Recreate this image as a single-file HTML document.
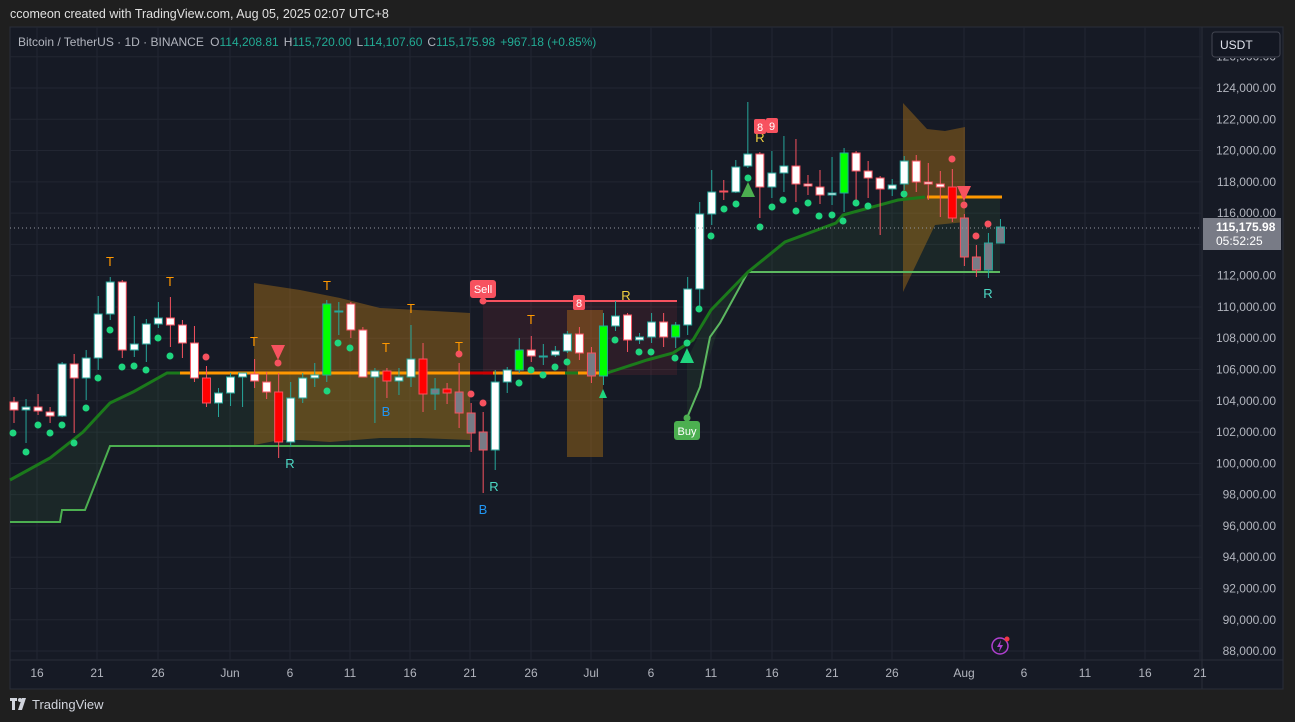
<!DOCTYPE html>
<html><head><meta charset="utf-8"><style>
html,body{margin:0;padding:0;background:#1f1f1f;width:1295px;height:722px;overflow:hidden;font-family:"Liberation Sans",sans-serif}
svg{display:block}
</style></head><body>
<svg id="s" width="1295" height="722" xmlns="http://www.w3.org/2000/svg" font-family="Liberation Sans, sans-serif">
<defs><clipPath id="ax"><rect x="0" y="58" width="1295" height="700"/></clipPath></defs>
<rect x="0" y="0" width="1295" height="722" fill="#1f1f1f"/>
<text x="10" y="18" fill="#e0e0e0" font-size="12.5">ccomeon created with TradingView.com, Aug 05, 2025 02:07 UTC+8</text>
<rect x="10" y="27" width="1273" height="662" fill="#161a25" stroke="#2a2e39"/>
<line x1="1202" y1="27" x2="1202" y2="689" stroke="#2a2e39"/>
<line x1="10" y1="660" x2="1283" y2="660" stroke="#2a2e39"/>
<g id="grid" stroke="#222632" stroke-width="1"></g>
<g id="plot"></g>
<g id="axis" fill="#b2b5be" font-size="12" clip-path="url(#ax)"></g>
<rect x="1212" y="32" width="68" height="25" rx="3" fill="#131722" stroke="#434651"/>
<text x="1220" y="49" fill="#e0e3eb" font-size="12">USDT</text>
<line x1="10" y1="228" x2="1202" y2="228" stroke="#9598a1" stroke-dasharray="1 3"/>
<rect x="1203" y="218" width="78" height="32" fill="#787b86"/>
<text x="1216" y="231" fill="#fff" font-size="12" font-weight="bold">115,175.98</text>
<text x="1216" y="245" fill="#fff" font-size="12">05:52:25</text>
<text x="18" y="46" font-size="12" fill="#b2b5be">Bitcoin / TetherUS · 1D · BINANCE <tspan dx="3">O</tspan><tspan fill="#22ab94">114,208.81</tspan><tspan dx="5">H</tspan><tspan fill="#22ab94">115,720.00</tspan><tspan dx="5">L</tspan><tspan fill="#22ab94">114,107.60</tspan><tspan dx="5">C</tspan><tspan fill="#22ab94">115,175.98</tspan><tspan dx="5" fill="#22ab94">+967.18 (+0.85%)</tspan></text>
<circle cx="1000" cy="646" r="8" fill="none" stroke="#b040d0" stroke-width="1.5"/>
<path d="M1001 640 L997 647 L1000 647 L999 652 L1003 645 L1000 645 Z" fill="#b040d0"/>
<circle cx="1007" cy="639" r="2.5" fill="#f23645"/>
<g fill="#d1d4dc"><rect x="10" y="698" width="7" height="3"/><rect x="12" y="698" width="3" height="12"/><circle cx="20" cy="700" r="2"/><path d="M22 698 L26 698 L22 710 L18 710 Z"/></g>
<text x="32" y="709" fill="#d1d4dc" font-size="13">TradingView</text>
</svg>
<script>
const NS="http://www.w3.org/2000/svg";
const plot=document.getElementById('plot'),grid=document.getElementById('grid'),axis=document.getElementById('axis');
function el(p,t,a,txt){const e=document.createElementNS(NS,t);for(const k in a)e.setAttribute(k,a[k]);if(txt!==undefined)e.textContent=txt;p.appendChild(e);return e;}
for(let p=126000;p>=88000;p-=2000){const y=88+(124000-p)/2000*31.28;if(y>30){el(grid,'line',{x1:10,x2:1202,y1:y,y2:y});}
 el(axis,'text',{x:1276,y:y+4,'text-anchor':'end'},p.toLocaleString('en-US')+'.00');}
const dl=[[37,'16'],[97,'21'],[158,'26'],[230,'Jun'],[290,'6'],[350,'11'],[410,'16'],[470,'21'],[531,'26'],[591,'Jul'],[651,'6'],[711,'11'],[772,'16'],[832,'21'],[892,'26'],[964,'Aug'],[1024,'6'],[1085,'11'],[1145,'16'],[1200,'21']];
dl.forEach(d=>{el(grid,'line',{x1:d[0],x2:d[0],y1:27,y2:660});el(document.getElementById('s'),'text',{x:d[0],y:677,'text-anchor':'middle',fill:'#b2b5be','font-size':12},d[1]);});
el(plot,'path',{d:'M10 480 L50 458 L83 432 L110 403 L133 392 L167 373 L180 373 L470 373 L470 446 L110 446 L85 510 L60 510 L60 522 L10 522 Z',fill:'rgba(76,175,80,0.09)'});
el(plot,'path',{d:'M687 360 L711 310 L748 272 L785 242 L836 223 L843 215 L898 200 L925 197 L1000 197 L1000 272 L748 272 L720 323 L700 387 L687 418 Z',fill:'rgba(76,175,80,0.09)'});
el(plot,'path',{d:'M254 283 L300 290 L340 298 L380 308 L470 313 L470 440 L420 438 L380 438 L330 442 L300 440 L280 440 L254 445 Z',fill:'rgba(200,130,20,0.38)'});
el(plot,'rect',{x:567,y:310,width:36,height:147,fill:'rgba(200,130,20,0.38)'});
el(plot,'path',{d:'M903 103 L927 129 L945 131 L965 127 L965 222 L935 225 L903 292 Z',fill:'rgba(200,130,20,0.38)'});
el(plot,'rect',{x:483,y:301,width:194,height:74,fill:'rgba(242,54,69,0.1)'});
el(plot,'line',{x1:483,x2:677,y1:301,y2:301,stroke:'#f7525f','stroke-width':2});
el(plot,'path',{d:'M10 522 L60 522 L62 510 L85 510 L110 446 L470 446',fill:'none',stroke:'#4caf50','stroke-width':2});
el(plot,'path',{d:'M687 418 L700 387 L710 337 L720 323 L748 272 L1000 272',fill:'none',stroke:'#5cb860','stroke-width':2});
el(plot,'path',{d:'M10 480 L50 458 L83 432 L110 403 L133 392 L167 373 L180 373',fill:'none',stroke:'#1b7a1b','stroke-width':3});
el(plot,'path',{d:'M180 373 L470 373',stroke:'#ff9800','stroke-width':3});
el(plot,'path',{d:'M470 373 L493 373',stroke:'#cc0000','stroke-width':3});
el(plot,'path',{d:'M493 373 L565 373',stroke:'#ff9800','stroke-width':3});
el(plot,'path',{d:'M565 373 L578 373',stroke:'#1b7a1b','stroke-width':3});
el(plot,'path',{d:'M578 373 L607 373',stroke:'#ff9800','stroke-width':3});
el(plot,'path',{d:'M607 373 L647 360 L673 353 L693 340 L711 310 L748 272 L785 242 L836 223 L843 215 L898 200 L925 197',fill:'none',stroke:'#1b7a1b','stroke-width':3});
el(plot,'path',{d:'M927 197 L1002 197',stroke:'#ff9800','stroke-width':3});
const C=[[402,410,397,423,'r'],[407,410,399,443,'t'],[407,411,394,415,'r'],[412,416,407,423,'r'],[364,416,362,417,'t'],[364,378,354,433,'r'],[358,378,350,400,'t'],[314,358,296,370,'t'],[282,314,277,320,'t'],[282,350,280,358,'r'],
[344,350,316,357,'t'],[324,344,319,362,'t'],[318,324,302,328,'t'],[318,325,297,347,'r'],[325,343,320,358,'r'],[343,378,326,382,'r'],[378,403,366,407,'R'],[393,403,388,417,'t'],[377,393,373,406,'t'],[373,377,373,407,'t'],
[374,381,359,388,'r'],[382,392,372,399,'r'],[392,442,373,458,'R'],[398,442,382,447,'t'],[378,398,373,403,'t'],[375,378,363,387,'t'],[304,375,300,382,'G'],[311,312,302,335,'t'],[304,330,302,338,'r'],[330,377,327,377,'r'],
[371,377,368,423,'t'],[371,381,368,398,'R'],[377,381,368,395,'t'],[359,377,325,387,'t'],[359,394,343,412,'R'],[389,394,378,410,'gt'],[389,393,383,404,'R'],[392,413,363,428,'gr'],[413,433,403,452,'gr'],[432,450,412,493,'gr'],
[382,450,370,470,'t'],[370,382,367,393,'t'],[350,370,338,373,'G'],[350,356,336,362,'r'],[356,357,344,365,'t'],[351,355,346,357,'t'],[334,351,331,353,'t'],[334,353,327,360,'r'],[353,376,347,383,'gr'],[326,376,313,385,'G'],
[316,326,301,331,'t'],[315,340,313,352,'r'],[337,340,333,344,'t'],[322,337,313,343,'t'],[322,337,313,347,'r'],[325,337,322,348,'G'],[289,325,277,335,'t'],[214,289,202,310,'t'],[192,214,170,225,'t'],[191,192,180,200,'r'],
[167,192,160,193,'t'],[154,166,102,168,'t'],[154,187,152,218,'r'],[173,187,151,198,'t'],[166,173,136,192,'t'],[166,184,139,202,'r'],[184,186,175,195,'r'],[187,195,170,204,'r'],[193,195,157,205,'t'],[153,193,148,212,'G'],
[153,171,151,205,'r'],[171,178,161,198,'r'],[178,189,176,235,'r'],[185,189,179,196,'t'],[161,184,156,190,'t'],[161,182,155,192,'r'],[182,184,163,200,'r'],[184,187,171,217,'r'],[187,218,169,222,'R'],[218,257,214,266,'gr'],
[257,270,245,277,'gr'],[243,270,233,278,'gt'],[227,243,219,243,'gt']];
const RED='#f7525f',TEAL='#26a69a';
C.forEach((c,i)=>{const x=14+i*12.03;let fill,st;
 switch(c[4]){case 'r':fill='#fff';st=RED;break;case 't':fill='#fff';st=TEAL;break;case 'R':fill='#ff0000';st=RED;break;case 'G':fill='#00ff00';st=TEAL;break;case 'gr':fill='#787b86';st=RED;break;default:fill='#787b86';st=TEAL;}
 el(plot,'line',{x1:x,x2:x,y1:c[2],y2:c[3],stroke:st,'stroke-width':1});
 el(plot,'rect',{x:x-4,y:c[0],width:8,height:Math.max(1,c[1]-c[0]),fill:fill,stroke:st,'stroke-width':1});});
const G=[[13,433],[26,452],[38,425],[50,433],[62,425],[74,443],[86,408],[98,378],[110,330],[122,367],[134,366],[146,370],[158,338],[170,356],[327,391],[338,343],[350,348],[519,383],[531,370],[543,375],[555,367],[567,362],[615,340],[639,352],[651,352],[675,358],[687,343],[699,309],[711,236],[724,209],[736,204],[748,178],[760,227],[772,207],[783,200],[796,211],[808,203],[819,216],[832,215],[843,221],[856,203],[868,206],[904,194]];
G.forEach(d=>el(plot,'circle',{cx:d[0],cy:d[1],r:3.5,fill:'#1fd67f'}));
const R=[[206,357],[278,363],[459,354],[471,394],[483,403],[952,159],[964,205],[976,236],[988,224]];
R.forEach(d=>el(plot,'circle',{cx:d[0],cy:d[1],r:3.5,fill:RED}));
el(plot,'path',{d:'M271 345 L285 345 L278 360 Z',fill:RED});
el(plot,'path',{d:'M957 186 L971 186 L964 201 Z',fill:RED});
el(plot,'path',{d:'M741 197 L755 197 L748 182 Z',fill:'#4caf50'});
el(plot,'path',{d:'M680 363 L694 363 L687 348 Z',fill:'#1fd67f'});
el(plot,'path',{d:'M599 398 L607 398 L603 389 Z',fill:'#1fd67f'});
const T=[[110,266],[170,286],[254,346],[327,290],[411,313],[386,352],[459,351],[531,324]];
T.forEach(t=>el(plot,'text',{x:t[0],y:t[1],fill:'#ff9800','font-size':13,'text-anchor':'middle'},'T'));
[[290,468],[494,491],[988,298]].forEach(t=>el(plot,'text',{x:t[0],y:t[1],fill:'#4dd9c4','font-size':13,'text-anchor':'middle'},'R'));
[[386,416],[483,514]].forEach(t=>el(plot,'text',{x:t[0],y:t[1],fill:'#2196f3','font-size':13,'text-anchor':'middle'},'B'));
[[626,300],[760,142]].forEach(t=>el(plot,'text',{x:t[0],y:t[1],fill:'#f0d040','font-size':13,'text-anchor':'middle'},'R'));
el(plot,'rect',{x:470,y:280,width:26,height:18,rx:3,fill:RED});
el(plot,'text',{x:483,y:293,fill:'#fff','font-size':11,'text-anchor':'middle'},'Sell');
el(plot,'circle',{cx:483,cy:301,r:3.5,fill:RED});
el(plot,'rect',{x:674,y:421,width:26,height:19,rx:3,fill:'#4caf50'});
el(plot,'text',{x:687,y:435,fill:'#fff','font-size':11,'text-anchor':'middle'},'Buy');
el(plot,'circle',{cx:687,cy:418,r:3.5,fill:'#4caf50'});
[[579,303,'8'],[760,127,'8'],[772,126,'9']].forEach(t=>{el(plot,'rect',{x:t[0]-6,y:t[1]-8,width:12,height:15,rx:2,fill:RED});el(plot,'text',{x:t[0],y:t[1]+4,fill:'#fff','font-size':11,'text-anchor':'middle'},t[2]);});
</script>
</body></html>
